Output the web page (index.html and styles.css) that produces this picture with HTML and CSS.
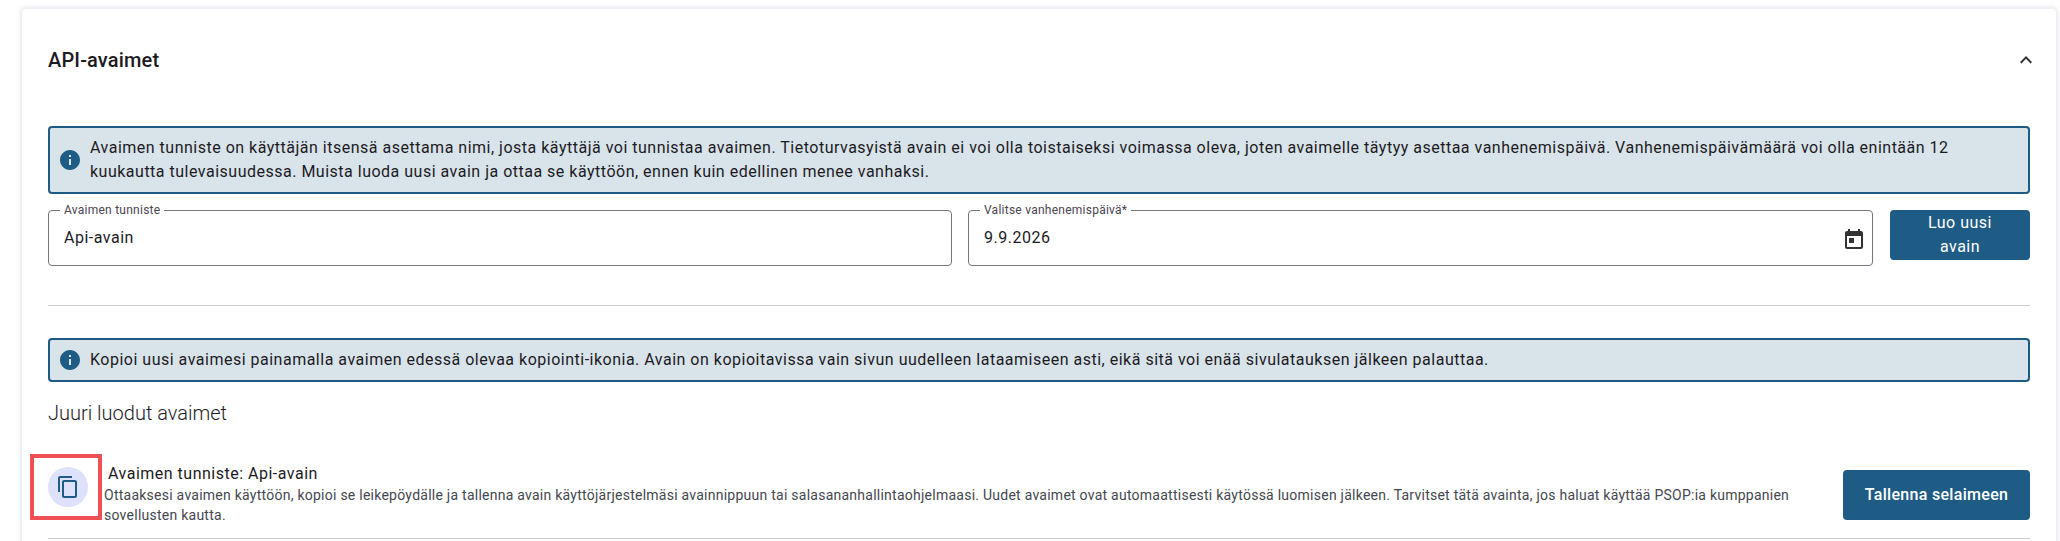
FILE: index.html
```html
<!DOCTYPE html>
<html lang="fi">
<head>
<meta charset="utf-8">
<title>API-avaimet</title>
<link rel="stylesheet" href="styles.css">
</head>
<body>
<main class="card">
  <header class="card-head">
    <h2 class="card-title">API-avaimet</h2>
    <svg class="chevron" viewBox="0 0 24 24" width="24" height="24"><path d="M7.41 15.41 12 10.83l4.59 4.58L18 14l-6-6-6 6z"/></svg>
  </header>
  <div class="alert alert-double">
    <svg class="alert-icon" viewBox="2 2 20 20" width="20" height="20"><path d="M12 2C6.48 2 2 6.48 2 12s4.48 10 10 10 10-4.48 10-10S17.52 2 12 2zm1 15h-2v-6h2v6zm0-8h-2V7h2v2z"/></svg>
    <p class="alert-text">Avaimen tunniste on käyttäjän itsensä asettama nimi, josta käyttäjä voi tunnistaa avaimen. Tietoturvasyistä avain ei voi olla toistaiseksi voimassa oleva, joten avaimelle täytyy asettaa vanhenemispäivä. Vanhenemispäivämäärä voi olla enintään 12 kuukautta tulevaisuudessa. Muista luoda uusi avain ja ottaa se käyttöön, ennen kuin edellinen menee vanhaksi.</p>
  </div>
  <form class="key-form">
    <fieldset class="field field-name">
      <legend class="field-label">Avaimen tunniste</legend>
      <span class="field-value">Api-avain</span>
    </fieldset>
    <fieldset class="field field-date">
      <legend class="field-label">Valitse vanhenemispäivä*</legend>
      <span class="field-value">9.9.2026</span>
      <svg class="calendar" viewBox="0 0 24 24" width="24" height="24"><path d="M19 3h-1V1h-2v2H8V1H6v2H5c-1.11 0-2 .9-2 2v14c0 1.1.89 2 2 2h14c1.1 0 2-.9 2-2V5c0-1.1-.9-2-2-2zm0 16H5V8h14v11zM7 10h5v5H7z"/></svg>
    </fieldset>
    <button type="button" class="btn btn-create">Luo uusi avain</button>
  </form>
  <hr class="rule rule-top">
  <div class="alert alert-single">
    <svg class="alert-icon" viewBox="2 2 20 20" width="20" height="20"><path d="M12 2C6.48 2 2 6.48 2 12s4.48 10 10 10 10-4.48 10-10S17.52 2 12 2zm1 15h-2v-6h2v6zm0-8h-2V7h2v2z"/></svg>
    <p class="alert-text">Kopioi uusi avaimesi painamalla avaimen edessä olevaa kopiointi-ikonia. Avain on kopioitavissa vain sivun uudelleen lataamiseen asti, eikä sitä voi enää sivulatauksen jälkeen palauttaa.</p>
  </div>
  <h3 class="section-title">Juuri luodut avaimet</h3>
  <section class="key-row">
    <span class="copy-wrap">
      <span class="copy-btn">
        <svg viewBox="0 0 24 24" width="24" height="24"><path d="M16 1H4c-1.1 0-2 .9-2 2v14h2V3h12V1zm3 4H8c-1.1 0-2 .9-2 2v14c0 1.1.9 2 2 2h11c1.1 0 2-.9 2-2V7c0-1.1-.9-2-2-2zm0 16H8V7h11v14z"/></svg>
      </span>
      <span class="highlight"></span>
    </span>
    <div class="key-info">
      <div class="key-name">Avaimen tunniste: Api-avain</div>
      <p class="key-desc">Ottaaksesi avaimen käyttöön, kopioi se leikepöydälle ja tallenna avain käyttöjärjestelmäsi avainnippuun tai salasananhallintaohjelmaasi. Uudet avaimet ovat automaattisesti käytössä luomisen jälkeen. Tarvitset tätä avainta, jos haluat käyttää PSOP:ia kumppanien sovellusten kautta.</p>
    </div>
    <button type="button" class="btn btn-save">Tallenna selaimeen</button>
  </section>
  <hr class="rule rule-bottom">
</main>
</body>
</html>
```

FILE: styles.css
```css
* { box-sizing: border-box; }
html, body { margin: 0; height: 541px; overflow: hidden; background: #fff; }
body {
  padding: 9px 4px 0 22px;
  font-family: Roboto, "Liberation Sans", sans-serif;
  color: #1c1b1f;
}
.card {
  height: 560px;
  padding: 0 26px;
  background: #fff;
  border-radius: 4px;
  box-shadow: 0 0 4px 2px rgba(120, 140, 170, 0.2);
}
.card-head {
  height: 117px;
  padding-bottom: 15px;
  display: flex;
  align-items: center;
  justify-content: space-between;
}
.card-title { margin: 0; font-size: 20px; font-weight: 500; line-height: 24px; letter-spacing: 0.15px; }
.chevron { fill: #333; margin-right: -8px; }
.alert {
  display: flex;
  align-items: center;
  gap: 10px;
  padding: 0 10px;
  background: #d9e3ea;
  border: 2px solid #1f5c85;
  border-radius: 4px;
}
.alert-double { height: 68px; }
.alert-single { height: 44px; }
.alert-icon { flex: none; fill: #1f5c85; }
.alert-text { margin: 0; font-size: 16px; line-height: 24px; letter-spacing: 0.5px; color: #1c1b1f; }
.key-form {
  display: flex;
  align-items: flex-start;
  gap: 16px;
  margin-top: 16px;
}
.field {
  position: relative;
  margin: 0;
  height: 61px;
  margin-top: -5px;
  padding: 0 48px 0 15px;
  border: 1px solid #79747e;
  border-radius: 4px;
  display: flex;
  align-items: center;
}
.field-name { flex: 0 0 904px; }
.field-date { flex: 1; }
.field-label {
  margin: 0 0 0 -4px;
  padding: 0 4px;
  font-size: 12px;
  line-height: 10px;
  letter-spacing: 0.25px;
  color: #49454f;
}
.field-value { font-size: 16px; line-height: 24px; letter-spacing: 0.5px; margin-top: -4px; }
.calendar { position: absolute; right: 6px; top: 13px; fill: #333; }
.btn {
  border: 0;
  border-radius: 4px;
  background: #1f5c85;
  color: #fff;
  font: 500 16px/24px Roboto, "Liberation Sans", sans-serif;
  letter-spacing: 0.3px;
  text-align: center;
}
.btn-create { flex: none; width: 140px; height: 50px; margin-left: 1px; padding: 0 24px; font-weight: 400; letter-spacing: 0.5px; }
.rule { margin: 0; border: 0; border-top: 1px solid #cfcfcf; }
.rule-top { margin-top: 39px; margin-bottom: 32px; }
.section-title { margin: 19px 0 0; font-size: 20px; font-weight: 300; line-height: 24px; }
.key-row {
  display: flex;
  align-items: center;
  height: 64px;
  margin-top: 38px;
}
.copy-wrap { position: relative; flex: none; align-self: flex-start; width: 56px; margin-top: 4px; display: flex; }
.copy-btn {
  width: 40px;
  height: 40px;
  border-radius: 50%;
  background: #dde1fb;
  display: flex;
  align-items: center;
  justify-content: center;
}
.copy-btn svg { fill: #1f5c85; }
.highlight {
  position: absolute;
  left: -18px;
  top: -13px;
  width: 72px;
  height: 66px;
  border: 4px solid #ef4f55;
}
.key-info { flex: 1; min-width: 0; align-self: flex-start; }
.key-name { margin-left: 4px; font-size: 16px; line-height: 22px; letter-spacing: 0.5px; }
.key-desc { margin: 0; font-size: 14px; line-height: 20px; letter-spacing: 0.25px; color: #44474f; }
.btn-save { flex: none; width: 187px; height: 50px; margin-left: 36px; }
.rule-bottom { margin-top: 11px; }
```
